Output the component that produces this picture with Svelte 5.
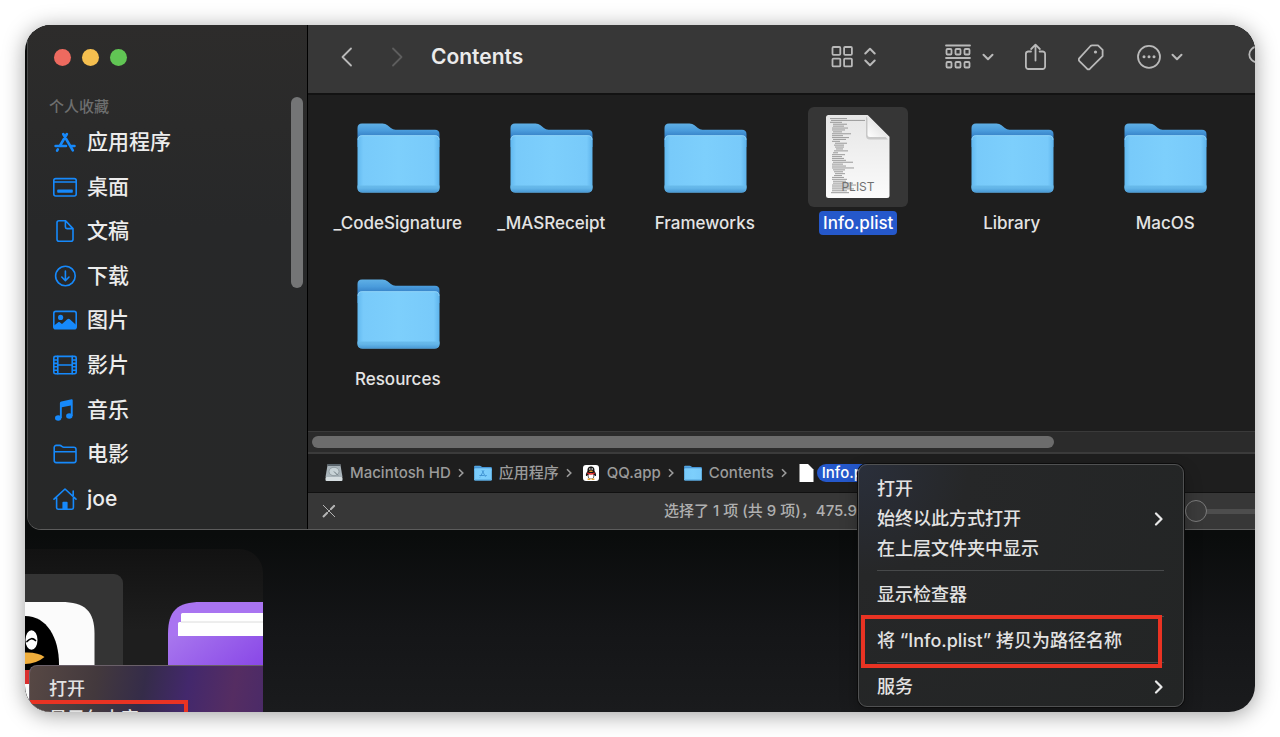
<script lang="ts">
	type Crumb = { icon: string; name: string; selected?: boolean };

	const places = [
		{ icon: 'apps', name: '应用程序' },
		{ icon: 'desktop', name: '桌面' },
		{ icon: 'document', name: '文稿' },
		{ icon: 'download', name: '下载' },
		{ icon: 'picture', name: '图片' },
		{ icon: 'film', name: '影片' },
		{ icon: 'music', name: '音乐' },
		{ icon: 'folder', name: '电影' },
		{ icon: 'home', name: 'joe' }
	];

	const files = ['_CodeSignature', '_MASReceipt', 'Frameworks', 'Info.plist', 'Library', 'MacOS', 'Resources'];

	const crumbs: Crumb[] = [
		{ icon: 'disk', name: 'Macintosh HD' },
		{ icon: 'appfolder', name: '应用程序' },
		{ icon: 'qq', name: 'QQ.app' },
		{ icon: 'folder', name: 'Contents' },
		{ icon: 'file', name: 'Info.plist', selected: true }
	];

	// Groups are drawn with a separator between them
	const menu = [
		[{ label: '打开' }, { label: '始终以此方式打开', more: true }, { label: '在上层文件夹中显示' }],
		[{ label: '显示检查器' }],
		[{ label: '将 “Info.plist” 拷贝为路径名称', marked: true }],
		[{ label: '服务', more: true }]
	];

	// Faint code lines on the plist page: indent, width
	const lines = [
		[0, 17], [1, 34], [0, 12], [3, 14], [3, 11], [2, 16], [2, 13], [3, 9], [2, 19], [2, 11],
		[2, 17], [3, 13], [2, 8], [5, 12], [4, 10], [5, 9], [6, 7], [4, 14], [3, 5], [2, 13],
		[2, 10], [2, 12], [2, 14], [3, 20], [2, 11], [2, 14], [2, 22], [3, 12], [4, 9], [5, 10],
		[4, 8], [2, 12], [2, 15], [3, 13], [3, 20], [2, 24], [2, 19], [2, 22], [2, 15], [1, 18]
	];

	let selected = $state('Info.plist');
	let zoom = $state(0);
</script>

{#snippet placeIcon(name: string)}
	<svg class="place-icon" viewBox="0 0 26 26" aria-hidden="true">
		{#if name === 'apps'}
			<path d="M11.2 5l9.6 16.3M14.9 5L7.8 17M3.6 17H14M18.3 17h4.2M5.8 20.4l-.7 1.2" stroke-width="2.6" />
		{:else if name === 'desktop'}
			<rect x="1.8" y="4.6" width="22.4" height="17.4" rx="2" />
			<path d="M2 8h22" />
			<rect class="fill" x="5.2" y="15.6" width="15.6" height="3.2" rx=".8" />
		{:else if name === 'document'}
			<path d="M13.6 2.8H7a2 2 0 0 0-2 2v16.4a2 2 0 0 0 2 2h12a2 2 0 0 0 2-2V10.6zM13.4 3v6a1.6 1.6 0 0 0 1.6 1.6h6" />
		{:else if name === 'download'}
			<circle cx="13.4" cy="13" r="9.8" />
			<path d="M13.4 8v9.4M9.8 14l3.6 3.7 3.6-3.7" />
		{:else if name === 'picture'}
			<rect x="1.8" y="4.4" width="22.4" height="17.4" rx="2" />
			<circle class="fill" cx="8.6" cy="10.4" r="2.6" />
			<path class="fill" d="M2 18.6l4-3.2c.7-.5 1.3-.5 2 0l2 1.6 5.3-4.7c.8-.7 1.7-.7 2.5 0l6.4 5.7v2.5a1.5 1.5 0 0 1-1.5 1.5H3.5A1.5 1.5 0 0 1 2 20.5z" />
		{:else if name === 'film'}
			<rect x="1.8" y="4.4" width="22.4" height="17.4" rx="1.6" />
			<path d="M5.8 4.4v17.4M20.2 4.4v17.4M5.8 13h14.4M2 8h3.8M2 11.4h3.8M2 14.8h3.8M2 18.2h3.8M20.2 8H24M20.2 11.4H24M20.2 14.8H24M20.2 18.2H24" />
		{:else if name === 'music'}
			<ellipse class="fill" cx="6.2" cy="21" rx="3.2" ry="2.7" />
			<ellipse class="fill" cx="17.3" cy="19" rx="3.2" ry="2.7" />
			<path class="fill" d="M7.9 6.2c0-1 .5-1.6 1.5-1.8l10.2-2.1c.7-.1 1.1.2 1.1.9V19h-1.9V8.4L9.8 10.3V21H7.9z" />
		{:else if name === 'folder'}
			<path d="M2.2 19.6V6.4a2 2 0 0 1 2-2h3.6c1.8 0 2.2 1.8 4 1.8h10a2.2 2.2 0 0 1 2.2 2.2v11.2a2 2 0 0 1-2 2H4.2a2 2 0 0 1-2-2zM2.2 10.8H24" />
		{:else}
			<path d="M2 13.2L13 3l11 10.2M4.6 11.6v10a1.7 1.7 0 0 0 1.7 1.7h13.4a1.7 1.7 0 0 0 1.7-1.7v-10M21.2 5v4.6" />
			<path class="fill" d="M10.4 23.3v-6.5q0-1 1-1h3.2q1 0 1 1v6.5z" />
		{/if}
	</svg>
{/snippet}

{#snippet folderArt()}
	<path d="M9.5 21q0-4.5 4.5-4.5h20.5q3 0 5 1.7l3.4 2.9q2 1.7 4.6 1.7H87q4.5 0 4.5 4.5V40h-82z" fill="url(#folder-back)" />
	<path d="M9.5 33q0-4.8 4.5-4.8h73q4.5 0 4.5 4.8v47.5q0 5-5 5h-72q-5 0-5-5z" fill="url(#folder-front)" />
	<path d="M9.5 78.5h82v2q0 5-5 5h-72q-5 0-5-5z" fill="url(#folder-lip)" />
	<path d="M10 33q0-4.3 4-4.3h73q4 0 4 4.3" fill="none" stroke="#a5ddfb" stroke-width=".6" />
{/snippet}

{#snippet chevron()}
	<svg class="chevron" viewBox="0 0 13 14" aria-hidden="true"><path d="M1.5 4.8L6 9.3l4.5-4.5" /></svg>
{/snippet}

<svg class="defs" aria-hidden="true">
	<defs>
		<linearGradient id="folder-back" x1="0" y1="0" x2="0" y2="1">
			<stop offset="0" stop-color="#5fb0e6" />
			<stop offset=".3" stop-color="#4a9cdc" />
			<stop offset=".55" stop-color="#3580c6" />
		</linearGradient>
		<linearGradient id="folder-front" x1="0" y1="0" x2="1" y2="0">
			<stop offset="0" stop-color="#62b9f0" />
			<stop offset=".07" stop-color="#78cafa" />
			<stop offset=".5" stop-color="#7dcffc" />
			<stop offset=".93" stop-color="#78cafa" />
			<stop offset="1" stop-color="#5eb4ec" />
		</linearGradient>
		<linearGradient id="folder-lip" x1="0" y1="0" x2="0" y2="1">
			<stop offset="0" stop-color="#69bbeb" />
			<stop offset=".4" stop-color="#63b5e8" />
			<stop offset="1" stop-color="#4898d4" />
		</linearGradient>
		<linearGradient id="page" x1="0" y1="0" x2="0" y2="1">
			<stop offset="0" stop-color="#e6e6e6" />
			<stop offset="1" stop-color="#fbfbfb" />
		</linearGradient>
		<linearGradient id="curl" x1="0" y1="1" x2="1" y2="0">
			<stop offset="0" stop-color="#fff" />
			<stop offset=".55" stop-color="#e4e4e4" />
		</linearGradient>
		<linearGradient id="purple" x1="0" y1="0" x2="1" y2="1">
			<stop offset="0" stop-color="#a877ee" />
			<stop offset="1" stop-color="#7b32e4" />
		</linearGradient>
	</defs>
</svg>

<main class="page">
	<div class="desktop">
		<section class="window">
			<aside class="sidebar">
				<div class="lights">
					<button class="light red" aria-label="Close"></button>
					<button class="light yellow" aria-label="Minimise"></button>
					<button class="light green" aria-label="Zoom"></button>
				</div>
				<div class="sidebar-body">
					<nav>
						<h2>个人收藏</h2>
						<ul class="places">
							{#each places as place}
								<li>
									<a href="#{place.icon}">
										{@render placeIcon(place.icon)}
										<span>{place.name}</span>
									</a>
								</li>
							{/each}
						</ul>
					</nav>
					<div class="v-thumb"></div>
				</div>
			</aside>

			<div class="content">
				<header class="toolbar">
					<button class="tool" aria-label="Back">
						<svg width="16" height="24" viewBox="0 0 16 24"><path d="M12 3.5L3.5 12l8.5 8.5" /></svg>
					</button>
					<button class="tool" aria-label="Forward" disabled>
						<svg width="16" height="24" viewBox="0 0 16 24"><path d="M4 3.5l8.5 8.5L4 20.5" /></svg>
					</button>
					<h1>Contents</h1>
					<div class="tools">
						<button class="tool view" aria-label="View">
							<svg width="23" height="24" viewBox="0 0 23 24">
								<rect x="1.5" y="2" width="7.8" height="7.8" rx="1" />
								<rect x="13.1" y="2" width="7.8" height="7.8" rx="1" />
								<rect x="1.5" y="13.6" width="7.8" height="7.8" rx="1" />
								<rect x="13.1" y="13.6" width="7.8" height="7.8" rx="1" />
							</svg>
							<svg width="13" height="24" viewBox="0 0 13 24"><path d="M1.3 8.5L6 3.8l4.7 4.7M1.3 15.5L6 20.2l4.7-4.7" stroke-width="2" /></svg>
						</button>
						<button class="tool" aria-label="Group">
							<svg width="27" height="26" viewBox="0 0 27 26">
								<path d="M1 1.5h24M1 14h24" />
								<rect x="1.5" y="5" width="5" height="5.5" rx="1" />
								<rect x="10.5" y="5" width="5" height="5.5" rx="1" />
								<rect x="19.5" y="5" width="5" height="5.5" rx="1" />
								<rect x="1.5" y="18" width="5" height="5.5" rx="1" />
								<rect x="10.5" y="18" width="5" height="5.5" rx="1" />
								<rect x="19.5" y="18" width="5" height="5.5" rx="1" />
							</svg>
							{@render chevron()}
						</button>
						<button class="tool" aria-label="Share">
							<svg width="23" height="28" viewBox="1 0 23 28">
								<path d="M7 8.5H4A2.500 2.500 0 0 0 1.900 11v12.500A2.500 2.500 0 0 0 4.400 26h14.200a2.500 2.500 0 0 0 2.500-2.500V11a2.500 2.500 0 0 0-2.500-2.500h-3M11.500 17.500V1.800M7.200 6l4.300-4.300L15.800 6" />
							</svg>
						</button>
						<button class="tool" aria-label="Tags">
							<svg width="29" height="28" viewBox="2 0 29 28">
								<path d="M16 2.3h6l4.6 4.500v6.400L14 25.700q-1.500 1.300-3 0l-7.600-7.600q-1.300-1.500 0-3L14.500 3q.7-.7 1.500-.7z" />
								<circle class="dot" cx="19.500" cy="9" r="1.6" />
							</svg>
						</button>
						<button class="tool" aria-label="More">
							<svg width="24" height="26" viewBox="0 0 24 26">
								<circle cx="12" cy="12.8" r="11" />
								<circle class="dot" cx="7" cy="12.8" r="1.5" />
								<circle class="dot" cx="12" cy="12.8" r="1.5" />
								<circle class="dot" cx="17" cy="12.8" r="1.5" />
							</svg>
							{@render chevron()}
						</button>
						<button class="tool search" aria-label="Search">
							<svg width="24" height="24" viewBox="0 0 24 24"><circle cx="9" cy="9.5" r="7.7" /><path d="M14.5 15l6 6" /></svg>
						</button>
					</div>
				</header>

				<div class="files">
					{#each files as file}
						<button class="file" class:selected={selected === file} onclick={() => (selected = file)}>
							<svg class="file-icon" viewBox="0 0 100 100" aria-hidden="true">
								{#if file.endsWith('.plist')}
									<path d="M18 10.5q0-2.5 2.5-2.5h39l22 22v58.500q0 2.500-2.500 2.500H20.500q-2.500 0-2.500-2.500z" fill="url(#page)" />
									{#each lines as [indent, width], i}
										<rect x={22 + indent} y={11 + i * 1.9} {width} height="1.1" fill="#8e8e8e" opacity=".8" />
									{/each}
									<path d="M58 9.5v19q0 4 4 4h18z" fill="#777" opacity=".3" />
									<path d="M59.5 8v19.5q0 2.5 2.5 2.5h19.5z" fill="url(#curl)" />
									<text x="50" y="84" text-anchor="middle">PLIST</text>
								{:else}
									{@render folderArt()}
								{/if}
							</svg>
							<span class="file-name">{file}</span>
						</button>
					{/each}
				</div>

				<div class="h-track"><div class="h-thumb"></div></div>

				<ol class="path">
					{#each crumbs as crumb, i}
						<li>
							{#if crumb.icon === 'disk'}
								<svg class="crumb-icon" viewBox="0 0 18 18">
									<path d="M2.7 0h12.6l2.2 13H.5z" fill="#a9b4ba" />
									<path d="M2.9 0h12.2l.3 2H2.6z" fill="#59636a" />
									<rect x=".5" y="13" width="17" height="4" rx="1" fill="#d5dde0" />
									<ellipse cx="9" cy="7.5" rx="5" ry="4.2" fill="#c7d2d6" stroke="#7f8b91" stroke-width=".7" />
									<path d="M9 7.5l4 4" stroke="#68757c" />
								</svg>
							{:else if crumb.icon === 'qq'}
								<svg class="crumb-icon" viewBox="0 0 18 18">
									<rect x="1" y="1" width="16" height="16" rx="3" fill="#fff" />
									<path d="M9 2.5c-3 0-3.6 2.3-3.5 4.5-1 1.5-2 3.5-1.5 5 .6.3 1-.5 1.5-1 .4 3 1.5 4 3.5 4s3.1-1 3.5-4c.5.5.9 1.3 1.5 1 .5-1.5-.5-3.5-1.5-5 .1-2.200-.5-4.500-3.500-4.500z" fill="#151515" />
									<ellipse cx="9" cy="11.8" rx="2.6" ry="2.9" fill="#fff" />
									<path d="M5.3 8.2q3.7 2 7.4 0v1.8q-3.7 1.6-7.4 0z" fill="#e02828" />
									<ellipse cx="9" cy="7.3" rx="2" ry=".8" fill="#f0a42c" />
									<circle cx="7.8" cy="5" r=".8" fill="#fff" />
									<circle cx="10.2" cy="5" r=".8" fill="#fff" />
									<path d="M5.6 15.3h2.8M9.6 15.3h2.8" stroke="#f0a42c" stroke-width="1.4" />
								</svg>
							{:else if crumb.icon === 'file'}
								<svg class="crumb-icon" viewBox="0 0 18 18"><path d="M2.5 0H11l5.5 5.5V18h-14z" fill="#fff" /></svg>
							{:else}
								<svg class="crumb-icon" viewBox="9 9 83 83">
									{@render folderArt()}
									{#if crumb.icon === 'appfolder'}
										<path d="M46 38l16 30M55 38L40 64M34 62h22M61 62h7M38 68l-2 3" fill="none" stroke="#3c8fd0" stroke-width="4" />
									{/if}
								</svg>
							{/if}
							<span class="crumb-name" class:selected={crumb.selected}>{crumb.name}</span>
							{#if i < crumbs.length - 1}
								<svg class="crumb-arrow" viewBox="0 0 6 10"><path d="M1 1.2L4.8 5 1 8.8" /></svg>
							{/if}
						</li>
					{/each}
				</ol>

				<footer class="status">
					<svg width="14" height="14" viewBox="0 0 14 14" aria-hidden="true">
						<path d="M1 1l12 12M1 13L13 1" stroke="#b4b4b4" />
						<path d="M8.5 5.5l4-4M1 13l4.5-4.5" stroke="#b4b4b4" stroke-width="2" />
					</svg>
					<span>选择了 1 项 (共 9 项)，475.9</span>
					<input type="range" min="0" max="100" bind:value={zoom} aria-label="Icon size" />
				</footer>
			</div>
		</section>

		<div class="menu">
			{#each menu as group, g}
				{#if g > 0}<hr />{/if}
				{#each group as item}
					<button class="item" class:marked={item.marked}>
						<span>{item.label}</span>
						{#if item.more}
							<svg width="10" height="14" viewBox="0 0 10 14" aria-hidden="true"><path d="M2 1.5L7.5 7 2 12.5" /></svg>
						{/if}
					</button>
				{/each}
			{/each}
		</div>

		<section class="panel">
			<div class="app-tile">
				<svg width="70" height="110" viewBox="0 0 70 110" aria-hidden="true">
					<path d="M0 0h36c24 0 33.5 9 33.5 32v78H0z" fill="#fbfbfb" />
					<path d="M0 14c22 0 34 22 34 48v12H0z" fill="#000" />
					<ellipse cx="6.5" cy="38" rx="6" ry="9.8" fill="#fff" />
					<path d="M2 39.5q4.5-5 8.5-1" fill="none" stroke="#000" stroke-width="1.7" stroke-linecap="round" />
					<path d="M0 50.5q13-.5 19.5 4.5Q11 62 0 62z" fill="#f0ae3c" />
					<path d="M0 68h6v14H0z" fill="#d92f2f" />
				</svg>
			</div>
			<svg class="archive" width="95" height="110" viewBox="0 0 95 110" aria-hidden="true">
				<path d="M0 110V32C0 9 9 0 33 0h62v110z" fill="#a974f1" />
				<path d="M13 12.5q0-1.5 1.5-1.5H95v10H13z" fill="#fff" />
				<path d="M10 21.5q0-1.5 1.5-1.5H95v14H10z" fill="#fff" />
				<path d="M13 20h82" stroke="#dcdcdc" />
				<path d="M0 36q0-2 2-2h93v76H0z" fill="url(#purple)" />
			</svg>
			<div class="menu-behind">
				<button class="item">打开</button>
				<button class="item">显示包内容</button>
			</div>
		</section>
	</div>
</main>

<style>
	:global(body) {
		background: #fff;
		font-family: Inter, 'Noto Sans CJK SC', sans-serif;
		font-weight: 500;
	}

	.defs {
		position: absolute;
		width: 0;
		height: 0;
	}

	button {
		padding: 0;
		border: 0;
		background: none;
		color: inherit;
		font: inherit;
	}

	ul,
	ol {
		margin: 0;
		padding: 0;
		list-style: none;
	}

	.page {
		display: flex;
		box-sizing: border-box;
		min-height: 100vh;
		padding: 25px;
	}

	.desktop {
		position: relative;
		display: flex;
		flex: 1;
		flex-direction: column;
		min-width: 0;
		border-radius: 26px;
		overflow: hidden;
		background: linear-gradient(#0a0c0c 510px, #141517 600px, #1a1b1d);
		box-shadow: 0 3px 22px rgba(0, 0, 0, 0.38);
	}

	.window {
		display: flex;
		margin-left: 2px;
		border-bottom: 1px solid #5c5c5c;
		border-left: 1px solid #4a4b4b;
		border-bottom-left-radius: 14px;
		overflow: hidden;
		background: #1e1e1e;
	}

	/* Sidebar */
	.sidebar {
		display: flex;
		flex: none;
		flex-direction: column;
		width: 279px;
		border-right: 1px solid #000;
		background: linear-gradient(#2d2c2b, #272829 40%, #272828);
	}

	.lights {
		display: flex;
		gap: 11px;
		padding: 24px 0 31px 26px;
	}

	.light {
		width: 17px;
		height: 17px;
		border-radius: 50%;
	}

	.red { background: #ed6a5f; }
	.yellow { background: #f5bf4f; }
	.green { background: #61c554; }

	.sidebar-body {
		display: flex;
		flex: 1;
		padding: 0 4px 8px 0;
	}

	nav {
		display: flex;
		flex: 1;
		flex-direction: column;
	}

	h2 {
		margin: 0 0 3px;
		padding-left: 21px;
		color: #6e6f6f;
		font-size: 15px;
		font-weight: 500;
		line-height: 20px;
	}

	.places {
		display: grid;
		flex: 1;
		grid-auto-rows: 1fr;
	}

	.places a {
		display: flex;
		align-items: center;
		gap: 9px;
		height: 100%;
		padding-left: 24px;
		color: #ececec;
		font-size: 21px;
		line-height: 28px;
		text-decoration: none;
	}

	.place-icon {
		width: 26px;
		height: 26px;
		fill: none;
		stroke: #1689fb;
		stroke-width: 1.6;
		stroke-linecap: round;
		stroke-linejoin: round;
	}

	.place-icon .fill {
		fill: #1689fb;
		stroke: none;
	}

	.v-thumb {
		width: 12px;
		height: 191px;
		border-radius: 6px;
		background: #747576;
	}

	/* Toolbar */
	.content {
		display: flex;
		flex: 1;
		flex-direction: column;
		min-width: 0;
	}

	.toolbar {
		display: flex;
		align-items: center;
		height: 70px;
		padding: 0 0 4px 31px;
		border-bottom: 2px solid #121212;
		box-sizing: border-box;
		background: #373737;
	}

	.tool {
		display: flex;
		flex: none;
		align-items: center;
		gap: 10px;
		margin-right: 34px;
	}

	.tool svg {
		fill: none;
		stroke: #b9b9b9;
		stroke-width: 1.8;
		stroke-linecap: round;
		stroke-linejoin: round;
	}

	.tool:disabled {
		margin-right: 26px;
	}

	.tool:disabled svg {
		stroke: #5d5d5d;
	}

	.tool .dot {
		fill: #b9b9b9;
		stroke: none;
	}

	.tool .chevron {
		width: 13px;
		height: 14px;
		stroke-width: 2;
	}

	h1 {
		flex: 1;
		margin: 0;
		color: #ebebeb;
		font-size: 21px;
		font-weight: 600;
		line-height: 28px;
	}

	.tools {
		display: flex;
		align-items: center;
		gap: 30px;
		margin-right: -17px;
	}

	.tools .tool {
		margin-right: 0;
	}

	.tools .view {
		margin-right: 38px;
	}

	.tools .search {
		margin-left: 34px;
	}

	/* Files */
	.files {
		display: grid;
		flex: 1;
		grid-template-columns: repeat(auto-fill, minmax(150px, 1fr));
		align-content: start;
		row-gap: 28px;
		padding: 12px 13px 40px;
	}

	.file {
		display: flex;
		flex-direction: column;
		align-items: center;
		gap: 4px;
		color: #e4e4e4;
		font-size: 17px;
		line-height: 24px;
	}

	.file-icon {
		width: 100px;
		height: 100px;
		border-radius: 6px;
	}

	.file-icon text {
		fill: #707070;
		font-size: 12px;
		font-weight: 400;
	}

	.file-name {
		padding: 0 4px;
		border-radius: 4px;
	}

	.file.selected .file-icon {
		background: #363636;
	}

	.file.selected .file-name {
		background: #2558cb;
		color: #fff;
	}

	.h-track {
		padding: 4px;
		border-top: 1px solid #3a3a3a;
		border-bottom: 2px solid #3b3b3b;
		background: #2b2b2b;
	}

	.h-thumb {
		width: 79%;
		height: 12px;
		border-radius: 6px;
		background: #6c6c6c;
	}

	/* Path and status */
	.path {
		display: flex;
		align-items: center;
		gap: 10px;
		height: 38px;
		padding-left: 17px;
		border-bottom: 1px solid #111;
		color: #9b9b9b;
		font-size: 15px;
		line-height: 18px;
		white-space: nowrap;
	}

	.path li {
		display: flex;
		align-items: center;
		gap: 7px;
	}

	.crumb-icon {
		width: 18px;
		height: 18px;
	}

	.crumb-name.selected {
		margin-left: -5px;
		padding: 0 5px;
		border-radius: 9px;
		background: #2558cb;
		color: #fff;
	}

	.crumb-arrow {
		width: 6px;
		height: 10px;
		fill: none;
		stroke: #9b9b9b;
		stroke-width: 1.6;
	}

	.status {
		display: flex;
		align-items: center;
		justify-content: space-between;
		height: 36px;
		padding-left: 14px;
		background: #373737;
		color: #b0b0b0;
		font-size: 15px;
		line-height: 24px;
	}

	input[type='range'] {
		width: 70px;
		height: 22px;
		margin: 0;
		appearance: none;
		background: linear-gradient(#4d4d4d, #4d4d4d) center / 100% 5px no-repeat;
	}

	input[type='range']::-webkit-slider-thumb {
		width: 22px;
		height: 22px;
		border: 1px solid #7b7b7b;
		border-radius: 50%;
		appearance: none;
		background: #3b3b3b;
	}

	/* Context menu */
	.menu {
		position: absolute;
		top: 439px;
		left: 833px;
		z-index: 2;
		box-sizing: border-box;
		width: 326px;
		padding: 8px 19px 5px 18px;
		border: 1px solid #505152;
		border-radius: 9px;
		background: radial-gradient(circle at 0 0, #2a2f3b, #262728 110px, #232525);
		box-shadow: 0 0 0 1px #0c0c0c, 0 8px 18px rgba(0, 0, 0, 0.3);
	}

	.item {
		position: relative;
		display: flex;
		align-items: center;
		justify-content: space-between;
		box-sizing: border-box;
		width: 100%;
		height: 30px;
		padding-top: 2px;
		color: #e2e2e2;
		font-size: 18px;
		line-height: 26px;
		white-space: nowrap;
	}

	.item svg {
		fill: none;
		stroke: #e8e8e8;
		stroke-width: 2.2;
		stroke-linecap: round;
		stroke-linejoin: round;
	}

	.menu hr {
		height: 1px;
		margin: 7px 0 8px;
		border: 0;
		background: #47494a;
	}

	/* Hand-drawn marker round the copy command */
	.marked::after {
		content: '';
		position: absolute;
		inset: -10px 2px -13px -16px;
		border: 4px solid #e93323;
	}

	/* Launcher behind the window */
	.panel {
		position: relative;
		display: flex;
		flex: 1;
		box-sizing: border-box;
		width: 238px;
		margin-top: 19px;
		border-top-right-radius: 24px;
		overflow: hidden;
		background: linear-gradient(#121212, #1e1e1e 50%);
	}

	.app-tile {
		width: 98px;
		height: 138px;
		margin-top: 25px;
		padding-top: 28px;
		border-top-right-radius: 9px;
		box-sizing: border-box;
		background: #343434;
	}

	.archive {
		flex: none;
		margin: 53px 0 0 45px;
	}

	.menu-behind {
		position: absolute;
		top: 116px;
		right: 0;
		left: 4px;
		height: 60px;
		padding: 7px 0 0 19px;
		border-top: 1px solid #6a6069;
		border-left: 1px solid #6a6069;
		border-top-left-radius: 8px;
		background: linear-gradient(100deg, #574844, #43393d 28%, #352c49 48%, #43286c 66%, #552d62 85%, #4a2a68);
	}

	.menu-behind::after {
		content: '';
		position: absolute;
		top: 34px;
		left: 0;
		width: 158px;
		height: 40px;
		box-sizing: border-box;
		border: 4px solid #e93323;
		border-left: 0;
	}
</style>
